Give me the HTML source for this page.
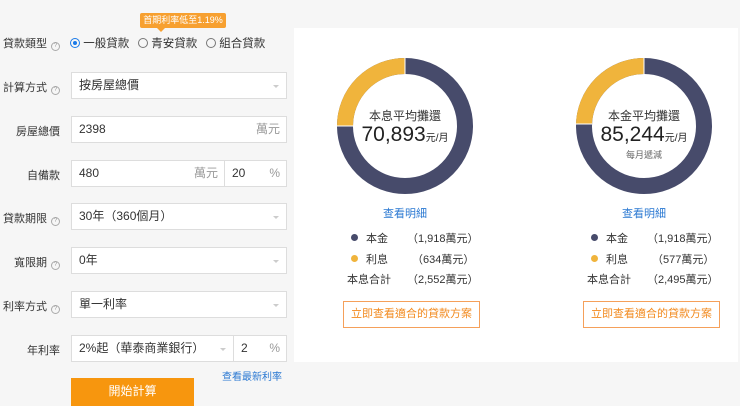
<!DOCTYPE html>
<html><head><meta charset="utf-8"><style>
*{box-sizing:border-box;margin:0;padding:0}
body{width:740px;height:406px;overflow:hidden;background:#f6f6f6;font-family:"Liberation Sans","Noto Sans CJK TC",sans-serif;color:#333;font-size:11px;position:relative}
.a{position:absolute}
.lbl{position:absolute;text-align:right;font-size:11px;color:#333;white-space:nowrap}
.q{display:inline-block;width:9px;height:9px;border:1px solid #aaa;border-radius:50%;font-size:6px;line-height:7px;text-align:center;color:#999;margin-left:4px;vertical-align:0px}
.box{position:absolute;background:#fff;border:1px solid #ddd;height:27px;line-height:25px;padding-left:7px;font-size:12px;color:#333}
.arr{position:absolute;right:7px;top:12px;width:0;height:0;border-left:3px solid transparent;border-right:3px solid transparent;border-top:3px solid #ccc}
.unit{position:absolute;right:6px;top:0;color:#999}
.panel{position:absolute;left:294px;top:28px;width:444px;height:334px;background:#fff}
.dot{display:inline-block;width:7px;height:7px;border-radius:50%;margin-right:8px;vertical-align:1px}
.btn2{position:absolute;width:137px;height:27px;border:1px solid #f5a05a;color:#f28a1e;text-align:center;line-height:25px;font-size:11px}
</style></head><body>
<div class="a" style="left:140px;top:13px;width:86px;height:15px;background:#f7a030;color:#fff;font-size:9px;line-height:15px;text-align:center;border-radius:2px">首期利率低至1.19%</div>
<div class="a" style="left:157px;top:28px;width:0;height:0;border-left:4px solid transparent;border-right:4px solid transparent;border-top:4px solid #f7a030"></div>
<div class="lbl" style="top:35px;right:680px">貸款類型<span class="q">?</span></div>
<div class="a" style="left:70px;top:35px;font-size:11.5px;white-space:nowrap"><span style="display:inline-block;width:10px;height:10px;border-radius:50%;border:1px solid #1a7ae8;vertical-align:-1px;position:relative"><span style="position:absolute;left:2px;top:2px;width:4px;height:4px;border-radius:50%;background:#1a7ae8"></span></span> 一般貸款</div>
<div class="a" style="left:138px;top:35px;font-size:11.5px;white-space:nowrap"><span style="display:inline-block;width:10px;height:10px;border-radius:50%;border:1px solid #777;vertical-align:-1px"></span> 青安貸款</div>
<div class="a" style="left:206px;top:35px;font-size:11.5px;white-space:nowrap"><span style="display:inline-block;width:10px;height:10px;border-radius:50%;border:1px solid #777;vertical-align:-1px"></span> 組合貸款</div>

<div class="lbl" style="top:79px;right:680px">計算方式<span class="q">?</span></div>
<div class="box" style="left:71px;top:72px;width:216px">按房屋總價<span class="arr"></span></div>
<div class="lbl" style="top:123px;right:680px">房屋總價</div>
<div class="box" style="left:71px;top:116px;width:216px">2398<span class="unit">萬元</span></div>
<div class="lbl" style="top:167px;right:680px">自備款</div>
<div class="box" style="left:71px;top:160px;width:154px">480<span class="unit">萬元</span></div>
<div class="box" style="left:224px;top:160px;width:63px">20<span class="unit">%</span></div>
<div class="lbl" style="top:210px;right:680px">貸款期限<span class="q">?</span></div>
<div class="box" style="left:71px;top:203px;width:216px">30年（360個月）<span class="arr"></span></div>
<div class="lbl" style="top:254px;right:680px">寬限期<span class="q">?</span></div>
<div class="box" style="left:71px;top:247px;width:216px">0年<span class="arr"></span></div>
<div class="lbl" style="top:298px;right:680px">利率方式<span class="q">?</span></div>
<div class="box" style="left:71px;top:291px;width:216px">單一利率<span class="arr"></span></div>
<div class="lbl" style="top:342px;right:680px">年利率</div>
<div class="box" style="left:71px;top:335px;width:163px">2%起（華泰商業銀行）<span class="arr"></span></div>
<div class="box" style="left:233px;top:335px;width:54px">2<span class="unit">%</span></div>
<div class="a" style="left:222px;top:368px;font-size:10px;color:#2a78d2">查看最新利率</div>
<div class="a" style="left:71px;top:378px;width:123px;height:28px;background:#f7960e;color:#fff;text-align:center;line-height:26px;font-size:12px">開始計算</div>

<div class="panel"></div>
<svg class="a" style="left:0;top:0" width="740" height="406">
<g fill="none" stroke-width="16">
<circle cx="405" cy="126" r="60" stroke="#474b6b"/>
<path d="M345 126 A60 60 0 0 1 405 66" stroke="#f0b43c"/>
<circle cx="644" cy="126" r="60" stroke="#474b6b"/>
<path d="M584 124 A60 60 0 0 1 644 66" stroke="#f0b43c"/>
</g>
<line x1="405" y1="58" x2="405" y2="74" stroke="#fff" stroke-width="1"/>
<line x1="337" y1="126" x2="353" y2="126" stroke="#fff" stroke-width="1"/>
<line x1="644" y1="58" x2="644" y2="74" stroke="#fff" stroke-width="1"/>
<line x1="576" y1="124" x2="592" y2="124" stroke="#fff" stroke-width="1"/>
</svg>
<div class="a" style="left:345px;top:107px;width:120px;text-align:center;font-size:12px">本息平均攤還</div>
<div class="a" style="left:345px;top:123px;width:120px;text-align:center;font-size:21px;color:#222;white-space:nowrap">70,893<span style="font-size:10px">元/月</span></div>
<div class="a" style="left:584px;top:107px;width:120px;text-align:center;font-size:12px">本金平均攤還</div>
<div class="a" style="left:584px;top:123px;width:120px;text-align:center;font-size:21px;color:#222;white-space:nowrap">85,244<span style="font-size:10px">元/月</span></div>
<div class="a" style="left:584px;top:148px;width:120px;text-align:center;font-size:9px;color:#666">每月遞減</div>

<div class="a" style="left:345px;top:205px;width:120px;text-align:center;font-size:11px;color:#2a78d2">查看明細</div>
<div class="a" style="left:584px;top:205px;width:120px;text-align:center;font-size:11px;color:#2a78d2">查看明細</div>

<div class="a" style="left:351px;top:229px;line-height:20.5px;font-size:11px;white-space:nowrap">
<div><span class="dot" style="background:#474b6b"></span>本金<span class="a" style="left:56px">（1,918萬元）</span></div>
<div><span class="dot" style="background:#f0b43c"></span>利息<span class="a" style="left:61px">（634萬元）</span></div>
<div style="margin-left:-4px">本息合計<span class="a" style="left:56px">（2,552萬元）</span></div>
</div>
<div class="a" style="left:591px;top:229px;line-height:20.5px;font-size:11px;white-space:nowrap">
<div><span class="dot" style="background:#474b6b"></span>本金<span class="a" style="left:56px">（1,918萬元）</span></div>
<div><span class="dot" style="background:#f0b43c"></span>利息<span class="a" style="left:61px">（577萬元）</span></div>
<div style="margin-left:-4px">本息合計<span class="a" style="left:56px">（2,495萬元）</span></div>
</div>
<div class="btn2" style="left:343px;top:301px">立即查看適合的貸款方案</div>
<div class="btn2" style="left:583px;top:301px">立即查看適合的貸款方案</div>
</body></html>
